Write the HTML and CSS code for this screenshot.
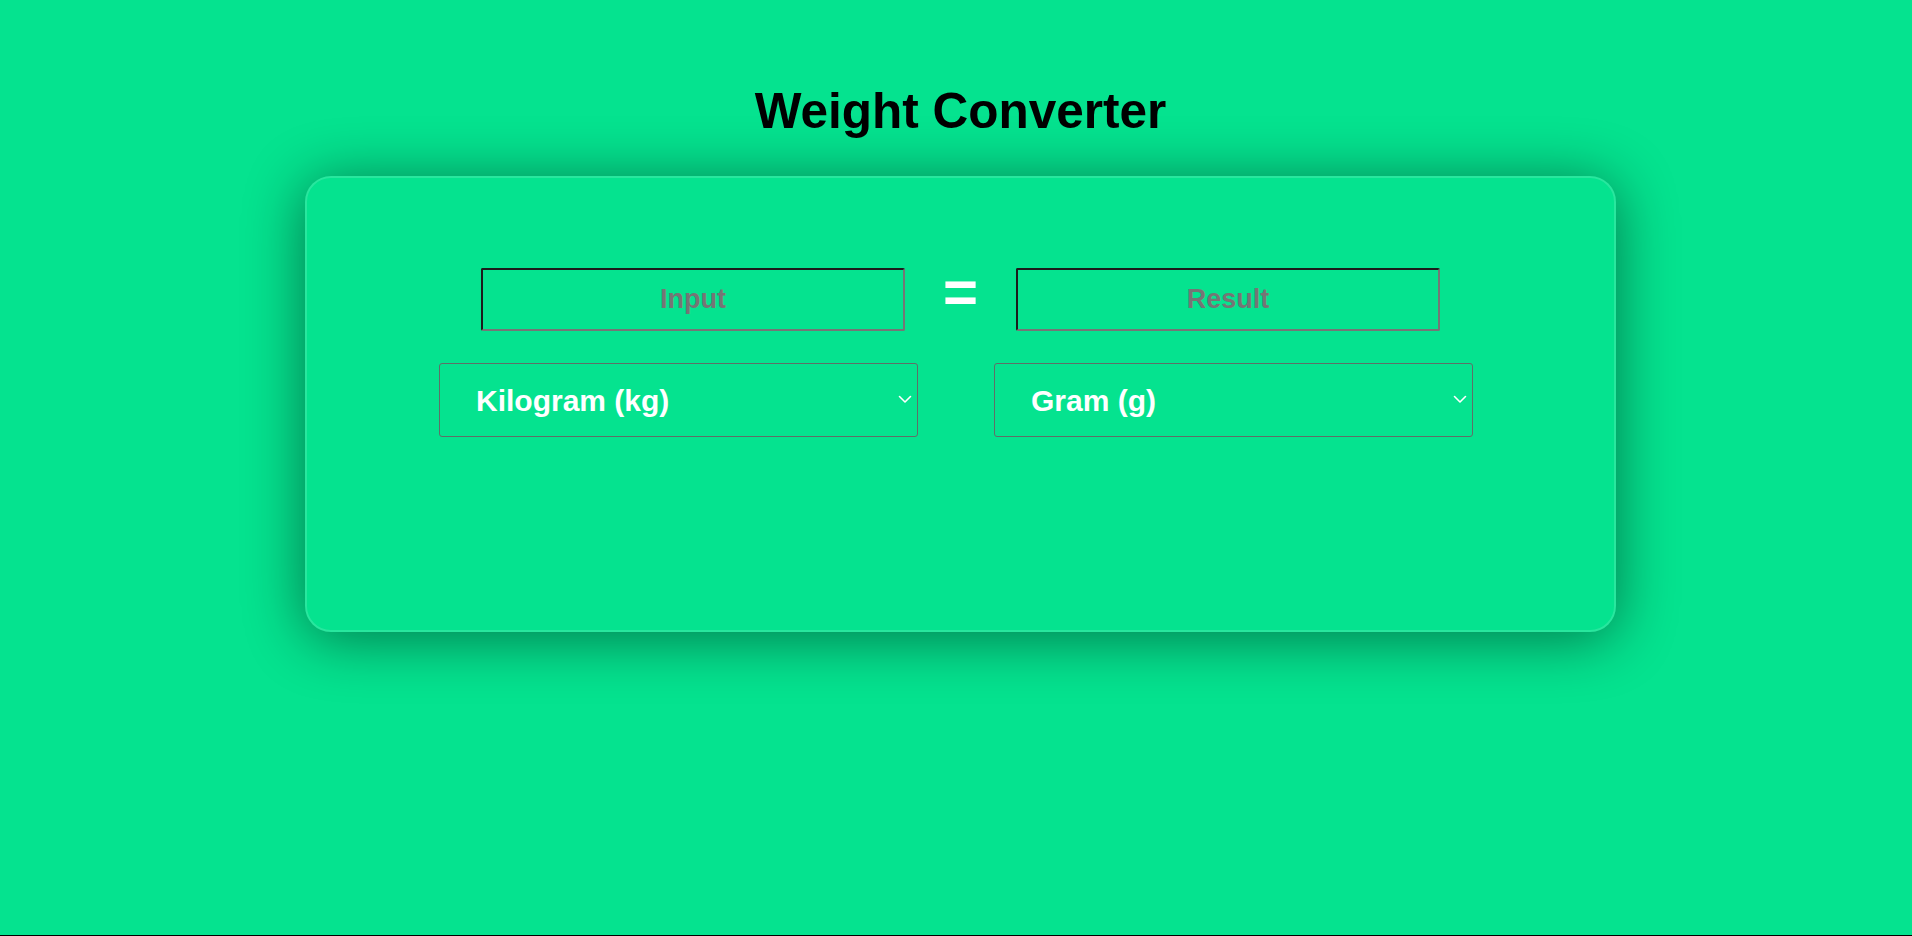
FILE: index.html
```html
<!DOCTYPE html>
<html lang="en">
<head>
<meta charset="utf-8">
<title>Weight Converter</title>
<link rel="stylesheet" href="styles.css">
</head>
<body>
  <h1 class="title">Weight Converter</h1>
  <main class="card">
    <div class="input-row">
      <input class="field" type="text" placeholder="Input">
      <span class="equals">=</span>
      <input class="field" type="text" placeholder="Result" readonly>
    </div>
    <div class="select-row">
      <div class="select-wrap">
        <select class="unit">
          <option selected>Kilogram (kg)</option>
          <option>Gram (g)</option>
          <option>Pound (lb)</option>
          <option>Ounce (oz)</option>
        </select>
        <svg class="chevron" width="14" height="9" viewBox="0 0 14 9" aria-hidden="true">
          <path d="M1.5 1.5 L7 7 L12.5 1.5" fill="none" stroke="#fff" stroke-width="1.6" stroke-linecap="round" stroke-linejoin="round"/>
        </svg>
      </div>
      <div class="select-wrap">
        <select class="unit">
          <option>Kilogram (kg)</option>
          <option selected>Gram (g)</option>
          <option>Pound (lb)</option>
          <option>Ounce (oz)</option>
        </select>
        <svg class="chevron" width="14" height="9" viewBox="0 0 14 9" aria-hidden="true">
          <path d="M1.5 1.5 L7 7 L12.5 1.5" fill="none" stroke="#fff" stroke-width="1.6" stroke-linecap="round" stroke-linejoin="round"/>
        </svg>
      </div>
    </div>
  </main>
</body>
</html>
```

FILE: styles.css
```css
html {
  background: #000;
}

body {
  margin: 0;
  padding: 8px 8px 8px 17px;
  height: calc(100vh - 1px);
  box-sizing: border-box;
  background: #05e38f;
  font-family: "Liberation Sans", Arial, sans-serif;
  overflow: hidden;
}

.title {
  margin: 74px 0 37px;
  font-size: 49.5px;
  line-height: 57px;
  font-weight: bold;
  color: #000;
  text-align: center;
}

.card {
  width: 1311px;
  height: 456px;
  box-sizing: border-box;
  margin: 0 auto;
  padding-top: 90px;
  border: 2px solid rgba(255, 255, 255, 0.14);
  border-radius: 26px;
  box-shadow: 0 6px 60px rgba(0, 0, 0, 0.48);
  display: flex;
  flex-direction: column;
  gap: 32px;
}

.input-row {
  display: flex;
  justify-content: center;
  align-items: flex-start;
}

.field {
  width: 424px;
  height: 63px;
  box-sizing: border-box;
  margin: 0;
  padding: 0 8px;
  border: 2px solid;
  border-color: #1c1c1c #767676 #767676 #1c1c1c;
  border-radius: 2px;
  background: transparent;
  font-family: "Liberation Sans", Arial, sans-serif;
  font-size: 27px;
  font-weight: bold;
  color: #000;
  text-align: center;
  outline: none;
}

.field::placeholder {
  color: #757575;
}

.equals {
  width: 111px;
  text-align: center;
  font-size: 60px;
  font-weight: bold;
  line-height: 48px;
  color: #fff;
}

.select-row {
  display: flex;
  justify-content: center;
  gap: 76px;
  padding-right: 9px;
}

.select-wrap {
  position: relative;
  width: 479px;
  height: 74px;
}

.unit {
  width: 100%;
  height: 100%;
  box-sizing: border-box;
  margin: 0;
  padding: 0 0 0 36px;
  border: 1px solid #5f6f68;
  border-radius: 3px;
  background: transparent;
  color: #fff;
  font-family: "Liberation Sans", Arial, sans-serif;
  font-size: 30px;
  font-weight: bold;
  appearance: none;
  -webkit-appearance: none;
  outline: none;
}

.unit option {
  color: #000;
  background: #fff;
}

.chevron {
  position: absolute;
  right: 6px;
  top: 32px;
  pointer-events: none;
}
```
